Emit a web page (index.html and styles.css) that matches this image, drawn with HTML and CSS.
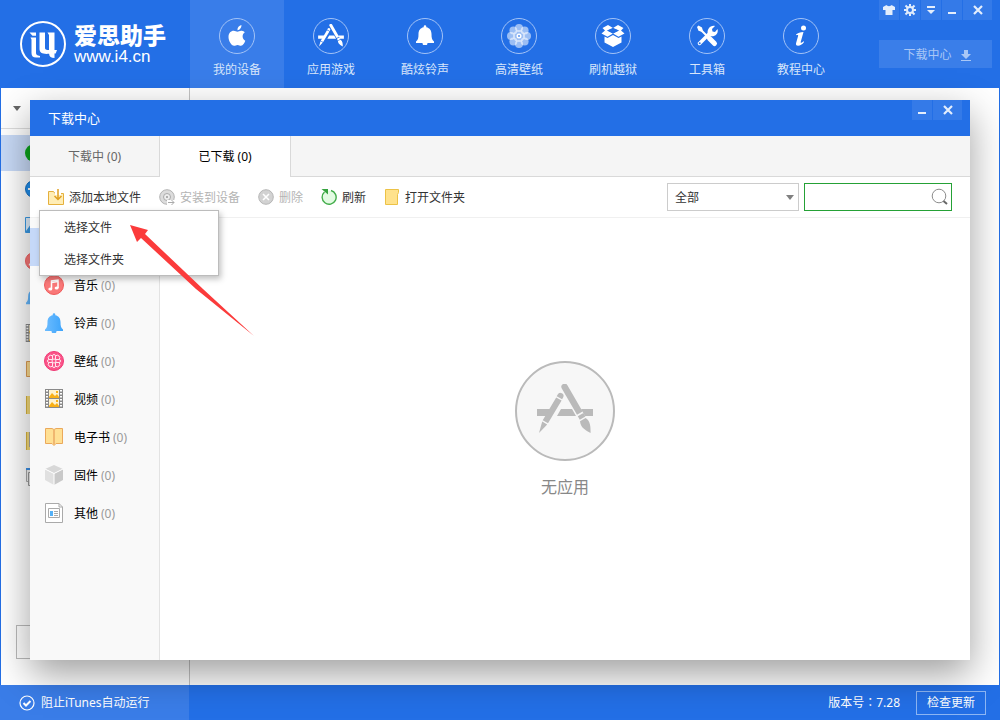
FILE: index.html
```html
<!DOCTYPE html>
<html lang="zh-CN">
<head>
<meta charset="utf-8">
<meta name="viewport" content="width=device-width, initial-scale=1">
<title>爱思助手</title>
<link rel="stylesheet" href="styles.css">
</head>
<body>
<svg class="defs" aria-hidden="true">
  <defs>
    <linearGradient id="bell-fill" x1="0" x2="1"><stop offset="0" stop-color="#6cbcff"/><stop offset="1" stop-color="#3da4fb"/></linearGradient>
    <symbol id="tools-a" viewBox="0 0 56 50">
      <path d="M0 25h14l-4 7H0zM24 25h11l4 7H20zM44 25h12v7h-8z"/>
      <path d="M20.700 10.500a3 3 0 0 1 5.400 3l-1 1.700-5.400-3zM19.200 13.400l5.400 3-13.600 22.800-5.300-3zM5.200 37.400l5 3L2 49z"/>
      <path d="M24.800 4.500a3.200 3.200 0 0 1 5.600-3.200l15.200 26.200-5.600 3.200zM40.800 32.200l5.600-3.200 2 3.500-5.600 3.200zM43 37.200l5.600-3.200c5 3 5 9 5 15-5-3-10-5-10.600-11.800z"/>
    </symbol>
    <symbol id="bell" viewBox="0 0 18 20">
      <path d="M7.700 1.500a1.300 1.300 0 0 1 2.600 0v.7c3.600.7 5.200 3.400 5.200 6.800 0 4 .5 6 2.500 7.500v1.500h-6.500a2.500 2.500 0 0 1-5 0H0v-1.500C2 15 2.500 13 2.500 9c0-3.400 1.600-6.100 5.200-6.800z"/>
    </symbol>
    <symbol id="film" viewBox="0 0 18 19">
      <path fill="#8a8a8a" d="M0 0h18v19H0z"/>
      <path fill="#fff3cf" d="M4 1h10v8H4zM4 10h10v8H4z"/>
      <path fill="#f9b016" d="M4 8l3-4 3 3 2-2 2 3v1H4zM4 17l3-4 3 3 2-2 2 3v1H4zM11 2h2v2h-2zM11 11h2v2h-2z"/>
      <path stroke="#fff" stroke-width="2" stroke-dasharray="1.500 1.500" d="M2 1v17M16 1v17"/>
    </symbol>
    <symbol id="note" viewBox="0 0 20 20">
      <circle cx="10" cy="10" r="9.500" fill="#f97878" stroke="#ef5b5b"/>
      <path d="M7.500 14V6l6.500-1v8" fill="none" stroke="#fff" stroke-width="1.500"/>
      <path d="M7.500 7.500l6.500-1" stroke="#fff" stroke-width="1.500"/>
      <ellipse cx="6.300" cy="14" rx="2" ry="1.600" fill="#fff"/><ellipse cx="12.600" cy="13" rx="2" ry="1.600" fill="#fff"/>
    </symbol>
    <symbol id="close" viewBox="0 0 10 10"><path d="M1 1l8 8M9 1L1 9" stroke="currentColor" stroke-width="2.200"/></symbol>
    <symbol id="minus" viewBox="0 0 10 10"><path d="M1 7h8v2H1z" fill="currentColor"/></symbol>
  </defs>
</svg>

<div class="app">
  <header class="topbar">
    <div class="brand">
      <svg class="brand-mark" viewBox="0 0 46 46" aria-hidden="true">
        <circle cx="23" cy="23" r="22" fill="none" stroke="#fff" stroke-width="2"/>
        <path fill="#fff" d="M9.500 11.500H16v3.300h-3.500zM10.500 16.500H16V32c0 1.500 1 2.500 4 3v1.500h-4c-3 0-4.500-1.500-4.500-4.500V18.500zM19.500 11.500H25V27c0 1.500 1 2 4 2V14l-1.500-2.500h7V29H37l-1.300 3.500h-1.200V37c-3.500 0-5.200-1.200-5.400-4.200-6.500.5-9.600-.8-9.600-5z"/>
      </svg>
      <div class="brand-text"><span class="brand-name">爱思助手</span><span class="brand-url">www.i4.cn</span></div>
    </div>
    <nav class="nav">
      <button class="nav-item active"><svg viewBox="0 0 36 36" aria-hidden="true"><circle class="ring" cx="18" cy="18" r="17.500"/><path fill="#fff" d="M18.400 12.200c0-2.600 1.600-4.600 4-5.200.2 2.700-1.500 5-4 5.200zM18.500 13.800c1-.1 2.400-1.300 4.300-1 1.200.1 2.300.6 3 1.500-3.300 2.300-2.600 7 .5 8.400-.8 2.300-2.300 5-4.300 5-1.300 0-1.800-.8-3.400-.8s-2.200.8-3.500.8C12.300 27.700 9.500 23 9.500 19c0-4 2.500-6.200 5.200-6.200 1.500 0 2.700.9 3.800 1z"/></svg><span>我的设备</span></button>
      <button class="nav-item"><svg viewBox="0 0 36 36" aria-hidden="true"><circle class="ring" cx="18" cy="18" r="17.500"/><use href="#tools-a" x="5" y="6" width="26" height="23" fill="#fff"/></svg><span>应用游戏</span></button>
      <button class="nav-item"><svg viewBox="0 0 36 36" aria-hidden="true"><circle class="ring" cx="18" cy="18" r="17.500"/><use href="#bell" x="9" y="7" width="18" height="20" fill="#fff"/></svg><span>酷炫铃声</span></button>
      <button class="nav-item"><svg viewBox="0 0 36 36" aria-hidden="true"><circle class="ring" cx="18" cy="18" r="17.500"/><g fill="#fff" fill-opacity=".55"><circle cx="18" cy="10" r="4"/><circle cx="23.600" cy="12.400" r="4"/><circle cx="26" cy="18" r="4"/><circle cx="23.600" cy="23.600" r="4"/><circle cx="18" cy="26" r="4"/><circle cx="12.400" cy="23.600" r="4"/><circle cx="10" cy="18" r="4"/><circle cx="12.400" cy="12.400" r="4"/><circle cx="18" cy="18" r="6"/></g><circle cx="18" cy="18" r="2.500" fill="#fff"/><circle cx="18" cy="18" r="1" fill="#5e96ef"/></svg><span>高清壁纸</span></button>
      <button class="nav-item"><svg viewBox="0 0 36 36" aria-hidden="true"><circle class="ring" cx="18" cy="18" r="17.500"/><path fill="#fff" d="M18 10l-5-3-5.500 3 2.500 2.500-3.500 3 6 3.200L18 15.500l5.500 3.200 6-3.200-3.500-3 2.500-2.500L23 7zM18 10.500l6 2-6 3-6-3zM9.500 18.500l3 1.600 5.500-3.100 5.500 3.100 3-1.600v6L18 29l-8.500-4.500z"/><path d="M12.200 12.500L18 9.800l5.800 2.700-5.800 3z" fill="#236fe6"/></svg><span>刷机越狱</span></button>
      <button class="nav-item"><svg viewBox="0 0 36 36" aria-hidden="true"><circle class="ring" cx="18" cy="18" r="17.500"/><path d="M10.500 10.500L25 25" stroke="#fff" stroke-width="2"/><path d="M8 9l1.500-1.500 3.500 2 .8 3-1.300 1.300-3-1z" fill="#fff"/><path d="M20.500 20.500l5 5" stroke="#fff" stroke-width="5" stroke-linecap="round"/><path d="M10.500 25.500L21 15" stroke="#fff" stroke-width="3.500" stroke-linecap="round"/><path fill="#fff" d="M19 16c-1.500-4 2-9 7-8l-3 3 .5 2.500 2.500.5 2.500-3c1.500 5-3.500 8.500-7.500 7z"/><circle cx="10.700" cy="25.300" r="1" fill="#236fe6"/></svg><span>工具箱</span></button>
      <button class="nav-item"><svg viewBox="0 0 36 36" aria-hidden="true"><circle class="ring" cx="18" cy="18" r="17.500"/><circle cx="20.500" cy="10" r="2.500" fill="#fff"/><path fill="#fff" d="M13 16.500c2-1.500 4-2.500 7.500-2.500L17.700 24c-.3 1.300.7 1 2.800-.7l.6.8c-2 2.500-4 3.700-6 3.700-2 0-2.400-1.300-2-2.800l2-7c.3-1-.3-1.200-1.800-.8z"/></svg><span>教程中心</span></button>
    </nav>
    <div class="top-right">
      <div class="win-controls">
        <button aria-label="皮肤"><svg width="12" height="10" viewBox="0 0 12 10"><path fill="currentColor" d="M3.500 0C4 1.500 8 1.500 8.500 0L12 2v3H9.500v5h-7V5H0V2z"/></svg></button>
        <button aria-label="设置"><svg width="12" height="12" viewBox="0 0 12 12"><circle cx="6" cy="6" r="3" fill="none" stroke="currentColor" stroke-width="2"/><path stroke="currentColor" stroke-width="2" d="M6 0v2.500M6 9.500V12M0 6h2.500M9.500 6H12M1.500 1.500l2 2M8.500 8.500l2 2M10.500 1.500l-2 2M1.500 10.500l2-2"/></svg></button>
        <button aria-label="菜单"><svg width="8" height="8" viewBox="0 0 8 8"><path fill="currentColor" d="M0 0h8v2H0zM0 4h8L4 8z"/></svg></button>
        <button aria-label="最小化"><svg width="10" height="10"><use href="#minus"/></svg></button>
        <button class="wide" aria-label="关闭"><svg width="10" height="10"><use href="#close"/></svg></button>
      </div>
      <button class="download-btn"><span>下载中心</span><svg width="10" height="11" viewBox="0 0 10 11" aria-hidden="true"><path fill="currentColor" d="M3 0h4v4h3L5 9 0 4h3zM0 10h10v1H0z"/></svg></button>
    </div>
  </header>

  <main class="workspace">
    <aside class="device-panel">
      <div class="device-head"><svg width="8" height="5" viewBox="0 0 8 5" aria-hidden="true"><path fill="#666" d="M0 0h8L4 5z"/></svg></div>
      <ul class="device-list">
        <li class="selected"><svg viewBox="0 0 18 18"><circle cx="9" cy="9" r="9" fill="#0ba51b"/></svg></li>
        <li><svg viewBox="0 0 18 18"><circle cx="9" cy="9" r="8.500" fill="#2090ee" stroke="#1671c4"/><path d="M3 8h5v2H3z" fill="#fff"/></svg></li>
        <li><svg viewBox="0 0 18 18"><path d="M.5 1.500h17v15H.5z" fill="#e3f2ff" stroke="#3b9be6"/><path d="M1 15l5-7 6 8H1z" fill="#3b9be6"/></svg></li>
        <li><svg viewBox="0 0 20 20"><use href="#note"/></svg></li>
        <li><svg viewBox="0 0 18 20"><use href="#bell" fill="url(#bell-fill)"/></svg></li>
        <li><svg viewBox="0 0 18 19"><use href="#film"/></svg></li>
        <li><svg viewBox="0 0 18 18"><path d="M1.500 1.500h15v15h-15z" fill="#fddc91" stroke="#dc9c55"/></svg></li>
        <li><svg viewBox="0 0 18 18"><path d="M1.500-1.500h15v20h-15z" fill="#f7dd7c" stroke="#d9b540"/></svg></li>
        <li><svg viewBox="0 0 18 18"><path d="M1.500-.5h15v19h-15z" fill="#f7dd7c" stroke="#d9b540"/><path d="M4 0h14v15H4z" fill="#aaa"/></svg></li>
        <li><svg viewBox="0 0 18 18"><path d="M1.500 1.500h15v12h-15z" fill="#f3f3f3" stroke="#aaa"/><path d="M1 0h16v2H1z" fill="#3b8fe6"/><path d="M3.500 4.500h14v13h-14z" fill="#eee" stroke="#999"/></svg></li>
      </ul>
      <div class="device-box"></div>
    </aside>
  </main>

  <footer class="statusbar">
    <button class="itunes-toggle"><svg width="16" height="16" viewBox="0 0 16 16" aria-hidden="true"><circle cx="8" cy="8" r="7" fill="none" stroke="currentColor" stroke-width="1.200"/><path d="M4.500 8l2.500 2.500 4.500-4.500" fill="none" stroke="currentColor" stroke-width="2"/></svg><span>阻止iTunes自动运行</span></button>
    <div class="version-area"><span class="version" lang="zh-TW">版本号：7.28</span><button class="update-btn">检查更新</button></div>
  </footer>

  <section class="dialog" role="dialog" aria-labelledby="dialog-title">
    <header class="dialog-head">
      <h1 id="dialog-title">下载中心</h1>
      <div class="win-controls">
        <button aria-label="最小化"><svg width="10" height="10"><use href="#minus"/></svg></button>
        <button class="wide" aria-label="关闭"><svg width="10" height="10"><use href="#close"/></svg></button>
      </div>
    </header>
    <div class="tabs" role="tablist">
      <button class="tab" role="tab" aria-selected="false">下载中 (0)</button>
      <button class="tab current" role="tab" aria-selected="true">已下载 (0)</button>
    </div>
    <div class="toolbar">
      <div class="tool-wrap">
        <button class="tool"><svg viewBox="0 0 16 16" aria-hidden="true"><path d="M.5 2.500h5l1.500 2h8.500v11H.5z" fill="#ffedb5" stroke="#e5b03c"/><path d="M7 0h6v6H7z" fill="#fff"/><path d="M10 0v10M6.500 7l3.500 3.500L13.500 7" fill="none" stroke="#e0a022" stroke-width="1.500"/></svg><span>添加本地文件</span></button>
        <div class="menu" role="menu">
          <button role="menuitem">选择文件</button>
          <button role="menuitem">选择文件夹</button>
        </div>
      </div>
      <button class="tool disabled" disabled><svg viewBox="0 0 16 16" aria-hidden="true"><circle cx="8" cy="8" r="7.300" fill="#dcdcdc" stroke="#b3b3b3"/><circle cx="8" cy="8" r="3.500" fill="#eee" stroke="#aaa"/><circle cx="8" cy="8" r="1" fill="#999"/><path d="M8 11h8v5H8z" fill="#fff"/><path d="M9 13.500h6M12.500 11l2.500 2.500-2.500 2.500" fill="none" stroke="#aaa"/></svg><span>安装到设备</span></button>
      <button class="tool disabled" disabled><svg viewBox="0 0 16 16" aria-hidden="true"><circle cx="8" cy="8" r="7.300" fill="#d2d2d2" stroke="#b6b6b6"/><path d="M5 5l6 6M11 5l-6 6" stroke="#fff" stroke-width="1.600"/></svg><span>删除</span></button>
      <button class="tool"><svg viewBox="0 0 16 16" aria-hidden="true"><circle cx="8" cy="8.500" r="7" fill="#e3fbe3"/><path d="M10 1.500A7 7 0 1 1 3.500 3" fill="none" stroke="#43ad4b" stroke-width="1.400"/><path d="M.5 0H7v5.500z" fill="#36a33f"/></svg><span>刷新</span></button>
      <button class="tool"><svg viewBox="0 0 16 16" aria-hidden="true"><path d="M1.500.5h13v3l-1 2v10h-12z" fill="#ffe28c" stroke="#ecc246"/></svg><span>打开文件夹</span></button>
      <div class="filters">
        <div class="select-wrap">
          <select aria-label="类型"><option>全部</option></select>
          <svg width="8" height="5" viewBox="0 0 8 5" aria-hidden="true"><path fill="#808080" d="M0 0h8L4 5z"/></svg>
        </div>
        <div class="search">
          <input type="text" aria-label="搜索">
          <svg width="18" height="18" viewBox="0 0 18 18" aria-hidden="true"><circle cx="8" cy="8" r="6.800" fill="none" stroke="#8c8c8c"/><path d="M12.500 13l3.500 3" stroke="#666" stroke-width="2"/></svg>
        </div>
      </div>
    </div>
    <div class="dialog-body">
      <ul class="categories">
        <li class="selected"></li>
        <li><svg viewBox="0 0 20 20"><use href="#note"/></svg><span>音乐</span><em>(0)</em></li>
        <li><svg viewBox="0 0 18 20"><use href="#bell" fill="url(#bell-fill)"/></svg><span>铃声</span><em>(0)</em></li>
        <li><svg viewBox="0 0 20 20"><circle cx="10" cy="10" r="9.500" fill="#fb5489" stroke="#ef3974"/><g fill="none" stroke="#ffe6ee"><circle cx="10" cy="10" r="2"/><path d="M8.500 8.500V5a1.500 1.500 0 0 1 3 0v3.500H15a1.500 1.500 0 0 1 0 3h-3.500V15a1.500 1.500 0 0 1-3 0v-3.500H5a1.500 1.500 0 0 1 0-3z"/><path d="M8.500 5A2 2 0 0 0 5 8.500M11.500 5A2 2 0 0 1 15 8.500M15 11.500a2 2 0 0 1-3.500 3.500M8.500 15A2 2 0 0 1 5 11.500"/></g></svg><span>壁纸</span><em>(0)</em></li>
        <li><svg viewBox="-1 0 20 20"><use href="#film" width="18" height="19"/></svg><span>视频</span><em>(0)</em></li>
        <li><svg viewBox="0 0 20 20"><path d="M1.500 1.500H8l2 1 2-1h6.500v15H12l-2 2-2-2H1.500z" fill="#ffe094" stroke="#eba95b"/><path d="M9 3h2v14.500H9z" fill="#f0b770"/></svg><span>电子书</span><em>(0)</em></li>
        <li><svg viewBox="0 0 20 20"><path d="M10 0l9 4-9 4.500L1 4z" fill="#d8d8d8"/><path d="M1 4l9 4.500V20l-9-5z" fill="#e0e0e0"/><path d="M19 4l-9 4.500V20l9-5z" fill="#c9c9c9"/><path d="M1 4l9 4.500L19 4M10 8.500V20" stroke="#fff" fill="none"/></svg><span>固件</span><em>(0)</em></li>
        <li><svg viewBox="0 0 20 20"><path d="M1.500.5H15l3.500 3.500v15.500h-17z" fill="#fff" stroke="#aaa"/><path d="M15 .5V4h3.500M4.500 5.500h11v9h-11z" fill="none" stroke="#aaa"/><path d="M6 8h3v5H6z" fill="#55b1f7"/><path d="M10 8.500h4M10 10.500h4M10 12.500h4" stroke="#aaa"/></svg><span>其他</span><em>(0)</em></li>
      </ul>
      <div class="empty">
        <svg viewBox="0 0 100 100" aria-hidden="true"><circle cx="50" cy="50" r="49" fill="#f7f7f7" stroke="#bababa" stroke-width="2"/><use href="#tools-a" x="22" y="23" width="56" height="50" fill="#bababa"/></svg>
        <p>无应用</p>
      </div>
    </div>
    <svg class="pointer" viewBox="0 0 124 111" aria-hidden="true"><path fill="#fb3b3b" d="M0 0l18 5-3 4 58 55 51 47-58-47L11 13l-4 4z"/></svg>
  </section>
</div>
</body>
</html>
```
FILE: styles.css
```css
* { box-sizing: border-box; }
body {
  margin: 0;
  font: 12px/18px "Noto Sans", "Noto Sans CJK SC", sans-serif;
  color: #333;
}
button, input, select { font: inherit; color: inherit; }
button { padding: 0; border: 0; background: none; cursor: pointer; }
ul { margin: 0; padding: 0; list-style: none; }
.defs { position: absolute; width: 0; height: 0; }

.app {
  position: relative;
  display: flex;
  flex-direction: column;
  height: 100vh;
  min-height: 600px;
  overflow: hidden;
  background: #fff;
}

/* Top bar */
.topbar { display: flex; height: 88px; flex: none; background: #236fe6; color: #fff; }
.brand { display: flex; align-items: center; gap: 8px; width: 190px; padding-left: 20px; flex: none; }
.brand-mark { width: 46px; height: 46px; }
.brand-text { display: flex; flex-direction: column; }
.brand-name { font-size: 23px; line-height: 26px; font-weight: 900; font-family: "Noto Sans CJK SC", sans-serif; white-space: nowrap; }
.brand-url { font: 17px/20px "Liberation Sans", Arial, sans-serif; }
.nav { display: flex; flex: 1; }
.nav-item {
  display: flex;
  flex-direction: column;
  align-items: center;
  gap: 7px;
  width: 94px;
  padding-top: 18px;
  color: #d8e6fb;
}
.nav-item.active { background: #397de9; }
.nav-item svg { width: 36px; height: 36px; }
.ring { fill: none; stroke: #a3c3f6; }
.top-right { display: flex; flex-direction: column; gap: 20px; width: 121px; padding-right: 8px; flex: none; }
.win-controls { display: flex; gap: 1px; height: 20px; }
.win-controls button {
  display: flex;
  align-items: center;
  justify-content: center;
  width: 20px;
  background: #347ae8;
  color: #e4eefc;
}
.win-controls .wide { width: 29px; }
.download-btn {
  display: flex;
  align-items: center;
  justify-content: center;
  gap: 9px;
  height: 28px;
  padding: 2px 0 0 3px;
  background: #3a7ee9;
  color: #a9c7f6;
}

/* Device panel behind the dialog */
.workspace { display: flex; flex: 1; min-height: 0; border: solid #236fe6; border-width: 0 1px; }
.device-panel { display: flex; flex-direction: column; width: 189px; border-right: 1px solid #c4c4c4; }
.device-head { display: flex; align-items: center; height: 41px; padding-left: 12px; border-bottom: 1px solid #ddd; }
.device-list { flex: 1; padding-top: 6px; }
.device-list li { display: flex; align-items: center; height: 36px; padding-left: 24px; }
.device-list .selected { background: #c8daf7; }
.device-list svg { width: 18px; height: 18px; }
.device-box { height: 34px; margin: 0 15px 26px; border: 1px solid #bbb; }

/* Status bar */
.statusbar { display: flex; justify-content: space-between; height: 35px; flex: none; background: #236fe6; color: #fff; }
.itunes-toggle { display: flex; align-items: center; gap: 6px; width: 189px; padding-left: 19px; background: #3a7de8; }
.version-area { display: flex; align-items: center; gap: 16px; padding-right: 14px; }
.version { font-family: "Noto Sans", "Noto Sans CJK TC", sans-serif; }
.update-btn { width: 70px; height: 24px; border: 1px solid #8db6f4; }

/* Download centre dialog */
.dialog {
  position: absolute;
  inset: 100px 30px 60px;
  display: flex;
  flex-direction: column;
  background: #fff;
  box-shadow: 0 14px 36px rgba(0, 0, 0, .38);
}
.dialog-head { display: flex; justify-content: space-between; height: 36px; padding: 0 8px 0 18px; background: #236fe6; color: #fff; }
.dialog-head h1 { margin: 0; font-size: 13px; line-height: 36px; font-weight: 400; }
.tabs { display: flex; height: 41px; background: #f5f5f5; border-bottom: 1px solid #d9d9d9; }
.tab { width: 130px; padding-top: 2px; border-right: 1px solid #d9d9d9; color: #666; }
.tab.current { width: 131px; margin-bottom: -1px; padding-top: 0; background: #fff; color: #000; }
.toolbar { display: flex; align-items: center; gap: 18px; height: 41px; padding: 0 18px; border-bottom: 1px solid #f0f0f0; }
.tool { display: flex; align-items: center; gap: 5px; white-space: nowrap; }
.tool svg { width: 16px; height: 16px; }
.tool span, .categories span, .categories em { padding-top: 2px; }
.tool.disabled { color: #b4b4b4; }
.tool-wrap { position: relative; }
.menu {
  position: absolute;
  z-index: 1;
  top: 23px;
  left: -9px;
  width: 180px;
  border: 1px solid #bcbcbc;
  background: #fff;
  box-shadow: 2px 3px 6px rgba(0, 0, 0, .25);
}
.menu button { display: block; width: 100%; height: 32px; padding: 2px 0 0 24px; text-align: left; }
.filters { display: flex; gap: 5px; margin-left: auto; }
.select-wrap, .search { position: relative; height: 28px; }
.select-wrap { width: 132px; }
.search { width: 148px; }
.select-wrap select, .search input {
  width: 100%;
  height: 100%;
  padding: 2px 7px 0;
  border: 1px solid #ccc;
  border-radius: 0;
  background: #fff;
  appearance: none;
  outline: 0;
}
.search input { padding-right: 26px; border-color: #25a136; }
.select-wrap svg { position: absolute; top: 12px; right: 5px; pointer-events: none; }
.search svg { position: absolute; top: 5px; right: 3px; }
.dialog-body { display: flex; flex: 1; min-height: 0; }
.categories { width: 130px; padding-top: 10px; background: #f9f9f9; border-right: 1px solid #e3e3e3; flex: none; }
.categories li { display: flex; align-items: center; height: 38px; padding-left: 14px; color: #000; }
.categories .selected { background: #c5d8f8; }
.categories svg { width: 20px; height: 20px; margin-right: 10px; }
.categories em { margin-left: 3px; font-style: normal; color: #999; }
.empty { display: flex; flex-direction: column; align-items: center; justify-content: center; gap: 14px; flex: 1; padding-bottom: 18px; }
.empty svg { width: 100px; height: 100px; }
.empty p { margin: 0; font-size: 16px; line-height: 24px; color: #888; }
.pointer { position: absolute; z-index: 2; top: 125px; left: 100px; width: 124px; height: 111px; pointer-events: none; }
```
